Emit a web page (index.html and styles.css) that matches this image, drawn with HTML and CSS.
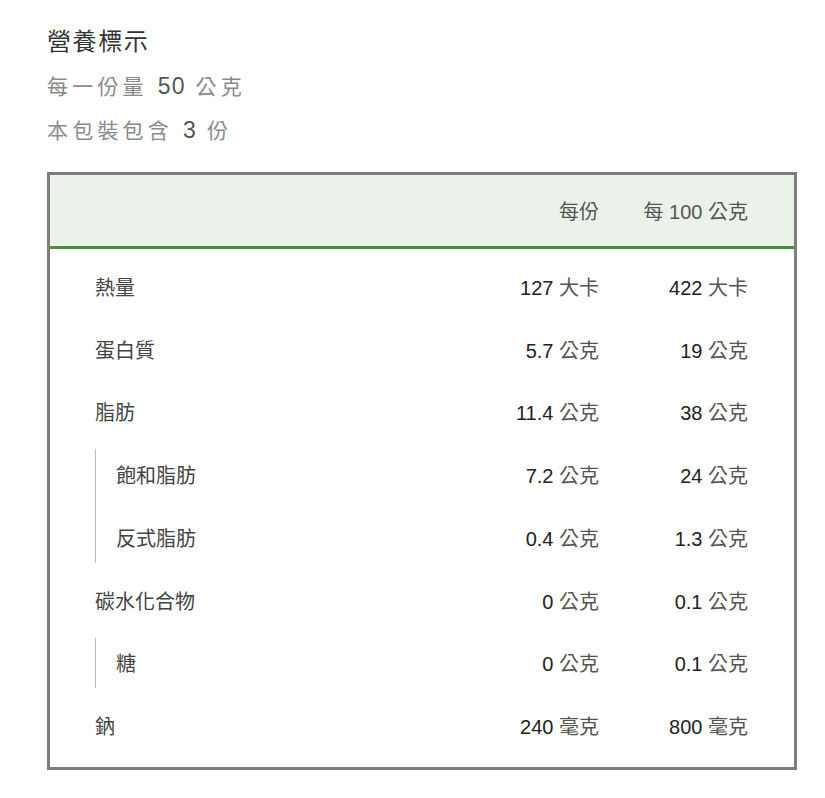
FILE: index.html
```html
<!DOCTYPE html>
<html lang="zh-Hant">
<head>
<meta charset="utf-8">
<title>營養標示</title>
<link rel="stylesheet" href="styles.css">
</head>
<body>
<div class="page">
  <h1 class="title">營養標示</h1>
  <p class="meta">每一份量 <b>50</b> 公克</p>
  <p class="meta">本包裝包含 <b>3</b> 份</p>

  <div class="facts">
    <div class="head">
      <span></span>
      <span class="num">每份</span>
      <span class="num">每 100 公克</span>
    </div>
    <div class="body">
      <div class="row"><span class="label">熱量</span><span class="num"><b>127</b> 大卡</span><span class="num"><b>422</b> 大卡</span></div>
      <div class="row"><span class="label">蛋白質</span><span class="num"><b>5.7</b> 公克</span><span class="num"><b>19</b> 公克</span></div>
      <div class="row"><span class="label">脂肪</span><span class="num"><b>11.4</b> 公克</span><span class="num"><b>38</b> 公克</span></div>
      <div class="group">
        <div class="row sub"><span class="label">飽和脂肪</span><span class="num"><b>7.2</b> 公克</span><span class="num"><b>24</b> 公克</span></div>
        <div class="row sub"><span class="label">反式脂肪</span><span class="num"><b>0.4</b> 公克</span><span class="num"><b>1.3</b> 公克</span></div>
      </div>
      <div class="row"><span class="label">碳水化合物</span><span class="num"><b>0</b> 公克</span><span class="num"><b>0.1</b> 公克</span></div>
      <div class="group">
        <div class="row sub"><span class="label">糖</span><span class="num"><b>0</b> 公克</span><span class="num"><b>0.1</b> 公克</span></div>
      </div>
      <div class="row"><span class="label">鈉</span><span class="num"><b>240</b> 毫克</span><span class="num"><b>800</b> 毫克</span></div>
    </div>
  </div>
</div>
</body>
</html>
```

FILE: styles.css
```css
* { box-sizing: border-box; }
html, body { margin: 0; padding: 0; background: #fff; }
body {
  font-family: "Liberation Sans", "Noto Sans CJK TC", sans-serif;
  color: #333;
}
.page {
  padding: 24px 28px 28px 47px;
}
.title {
  margin: 0;
  font-size: 24px;
  font-weight: 400;
  line-height: 36px;
  letter-spacing: 1.6px;
  color: #333;
}
.meta {
  margin: 9px 0 0 0;
  font-size: 21px;
  line-height: 36px;
  letter-spacing: 4.2px;
  color: #8a8a8a;
}
.meta + .meta {
  margin-top: 8px;
}
.meta b {
  font-weight: 400;
  font-size: 23px;
  line-height: 1;
  letter-spacing: 1px;
  color: #555;
}
.facts {
  margin-top: 23px;
  border: 3px solid #7d7d7d;
  width: 750px;
}
.head, .row {
  display: grid;
  grid-template-columns: 1fr 150px 149px;
  align-items: center;
  padding: 0 46px 0 45px;
  font-size: 20px;
}
.head {
  height: 74px;
  background: #ebf2ea;
  border-bottom: 3px solid #4e8c3f;
  color: #444;
}
.body {
  padding: 6px 0 10px 0;
}
.row {
  height: 62.75px;
}
.num {
  text-align: right;
  color: #555;
}
.num b {
  font-weight: 400;
  color: #222;
}
.label {
  color: #444;
}
.group {
  position: relative;
}
.group::before {
  content: "";
  position: absolute;
  left: 45px;
  top: 6px;
  bottom: 6px;
  width: 1px;
  background: #bdbdbd;
}
.row.sub .label {
  padding-left: 21px;
}
```
